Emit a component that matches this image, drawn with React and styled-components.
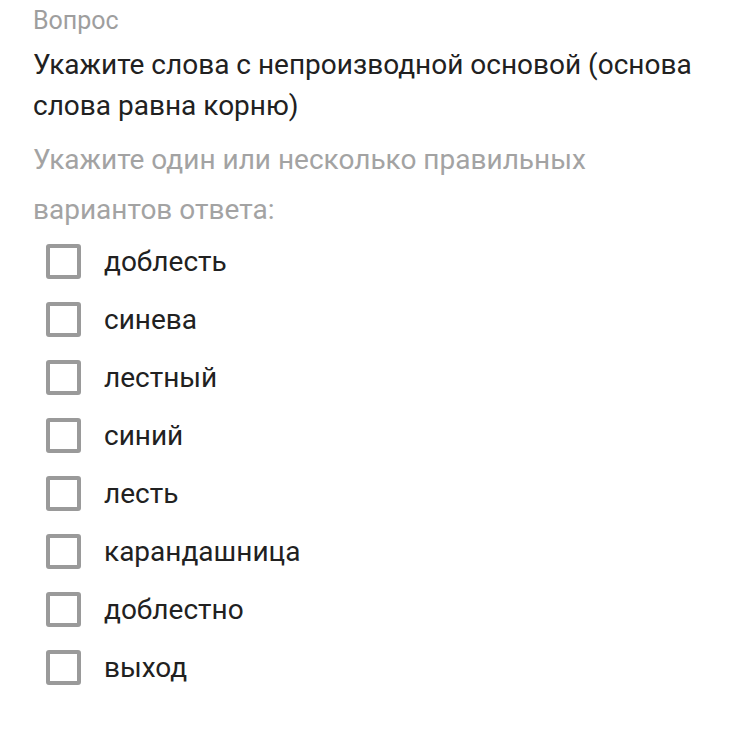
import React from "react"
import styled, { createGlobalStyle } from "styled-components"

const options = [
  "доблесть",
  "синева",
  "лестный",
  "синий",
  "лесть",
  "карандашница",
  "доблестно",
  "выход",
]

const GlobalStyle = createGlobalStyle`
  body {
    margin: 0;
    background: #ffffff;
    font-family: Roboto, "Noto Sans", sans-serif;
  }
`

const Page = styled.div`
  width: 750px;
  height: 750px;
  padding: 4px 0 0 33px;
  box-sizing: border-box;
`

const Label = styled.div`
  font-size: 25px;
  line-height: 34px;
  color: #9e9e9e;
`

const Question = styled.div`
  font-size: 28px;
  line-height: 41px;
  color: #212121;
  margin-top: 6px;
  width: 680px;
`

const Hint = styled.div`
  font-size: 28px;
  line-height: 50px;
  color: #a3a3a3;
  margin-top: 9px;
  width: 600px;
`

const List = styled.div`
  display: flex;
  flex-direction: column;
  margin-top: -3px;
  padding-left: 13px;
`

const Option = styled.label`
  display: flex;
  align-items: center;
  height: 58px;
  gap: 23px;
  font-size: 28px;
  color: #212121;
`

const Box = styled.span`
  width: 35px;
  height: 35px;
  box-sizing: border-box;
  border: 4px solid #9a9a9a;
  border-radius: 3px;
  flex-shrink: 0;
`

export default function App() {
  return (
    <Page>
      <GlobalStyle />
      <Label>Вопрос</Label>
      <Question>Укажите слова с непроизводной основой (основа слова равна корню)</Question>
      <Hint>Укажите один или несколько правильных вариантов ответа:</Hint>
      <List>
        {options.map(name => (
          <Option key={name}>
            <Box />
            {name}
          </Option>
        ))}
      </List>
    </Page>
  )
}
